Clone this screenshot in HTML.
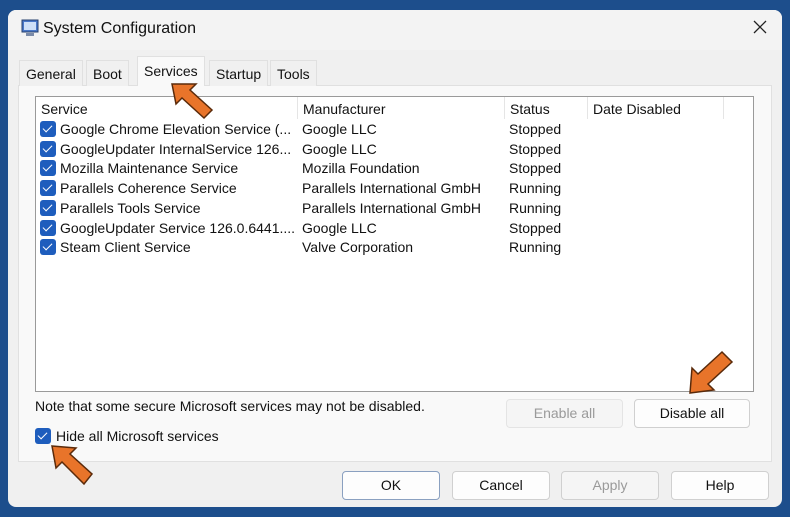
<!DOCTYPE html><html><head><style>
*{margin:0;padding:0;box-sizing:border-box}
body{width:790px;height:517px;background:#1d4e8c;font-family:"Liberation Sans",sans-serif;font-size:14px;color:#111;position:relative;overflow:hidden}
.win{position:absolute;left:8px;top:10px;width:774px;height:497px;background:#f0f0f0;border-radius:8px;overflow:hidden}
.title{position:absolute;left:0;top:0;width:774px;height:40px;background:#f3f3f3}
.a{position:absolute;white-space:nowrap}
.panel{position:absolute;left:10px;top:75px;width:754px;height:377px;background:#f9f9f9;border:1px solid #e0e0e0}
.tab{position:absolute;top:50px;height:26px;border:1px solid #e0e0e0;border-bottom:none;background:#f0f0f0;padding:5px 6px 0;font-size:14px}
.list{position:absolute;left:35px;top:96px;width:719px;height:296px;background:#fff;border:1px solid #9a9a9a}
.hdr{position:absolute;top:0;height:22px;font-size:14px;padding:4px 5px;border-right:1px solid #e5e5e5}
.cb{position:absolute;width:16px;height:16px;background:#1e5dbd;border-radius:3px}
.cb:after{content:"";position:absolute;left:5px;top:2px;width:4px;height:8px;border:solid #fff;border-width:0 1.5px 1.5px 0;transform:rotate(45deg)}
.btn{position:absolute;height:29px;border:1px solid #d0d0d0;background:#fdfdfd;border-radius:4px;text-align:center;line-height:27px;font-size:14px}
</style></head><body>
<div class="win">
<div class="title"></div>
<svg class="a" style="left:12px;top:9px" width="20" height="18"><rect x="2" y="1" width="16" height="12" fill="#4a78c8" stroke="#27406e"/><rect x="4" y="3" width="12" height="8" fill="#cfe0f7"/><rect x="6" y="14" width="8" height="3" fill="#7a8aa8"/></svg>
<div class="a" style="left:35px;top:10px;font-size:16px">System Configuration</div>
<svg class="a" style="left:745px;top:10px" width="14" height="14"><path d="M1 1L13 13M13 1L1 13" stroke="#222" stroke-width="1.3"/></svg>
<div class="panel"></div>
<div class="tab" style="left:11px">General</div>
<div class="tab" style="left:78px">Boot</div>
<div class="tab" style="left:129px;top:46px;height:30px;background:#f9f9f9;padding-top:6px">Services</div>
<div class="tab" style="left:201px">Startup</div>
<div class="tab" style="left:262px">Tools</div>
</div>
<div class="list">
<div class="hdr" style="left:0;width:262px">Service</div>
<div class="hdr" style="left:262px;width:207px">Manufacturer</div>
<div class="hdr" style="left:469px;width:83px">Status</div>
<div class="hdr" style="left:552px;width:136px">Date Disabled</div>
</div>
<div id="rows"></div>
<script>
var r=[["Google Chrome Elevation Service (...","Google LLC","Stopped"],["GoogleUpdater InternalService 126...","Google LLC","Stopped"],["Mozilla Maintenance Service","Mozilla Foundation","Stopped"],["Parallels Coherence Service","Parallels International GmbH","Running"],["Parallels Tools Service","Parallels International GmbH","Running"],["GoogleUpdater Service 126.0.6441....","Google LLC","Stopped"],["Steam Client Service","Valve Corporation","Running"]];
var h="";r.forEach(function(x,i){var y=121+i*19.7;h+='<div class="cb" style="left:40px;top:'+(y)+'px"></div><div class="a" style="left:60px;top:'+y+'px">'+x[0]+'</div><div class="a" style="left:302px;top:'+y+'px">'+x[1]+'</div><div class="a" style="left:509px;top:'+y+'px">'+x[2]+'</div>';});
document.getElementById("rows").innerHTML=h;
</script>
<div class="a" style="left:35px;top:398px">Note that some secure Microsoft services may not be disabled.</div>
<div class="btn" style="left:506px;top:399px;width:117px;color:#9a9a9a;background:#f5f5f5;border-color:#e4e4e4">Enable all</div>
<div class="btn" style="left:634px;top:399px;width:116px">Disable all</div>
<div class="cb" style="left:35px;top:428px"></div>
<div class="a" style="left:56px;top:428px">Hide all Microsoft services</div>
<div class="btn" style="left:342px;top:471px;width:98px;border-color:#8aa0c0">OK</div>
<div class="btn" style="left:452px;top:471px;width:98px">Cancel</div>
<div class="btn" style="left:561px;top:471px;width:98px;color:#9a9a9a;background:#f5f5f5">Apply</div>
<div class="btn" style="left:671px;top:471px;width:98px">Help</div>
<svg class="a" style="left:0;top:0" width="790" height="517">
<g fill="#e8742a" stroke="#5a2a0a" stroke-width="1.5">
<path d="M172 84 L196 84 L190 90 L212 110 L204 118 L182 98 L176 104 Z"/>
<path d="M690 393 L692 368 L698 374 L722 352 L732 362 L708 384 L714 390 Z"/>
<path d="M52 446 L76 448 L70 454 L92 474 L84 484 L62 462 L56 468 Z"/>
</g></svg>
</body></html>
